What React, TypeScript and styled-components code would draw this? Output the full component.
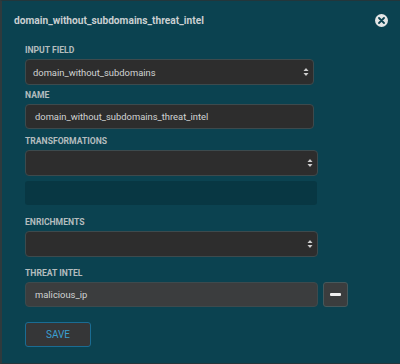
import React from "react";
import styled, { createGlobalStyle } from "styled-components";

const Global = createGlobalStyle`
  html, body { margin: 0; padding: 0; background: #0b4150; }
  body { font-family: Roboto, "Liberation Sans", Arial, sans-serif; }
  * { box-sizing: border-box; }
`;

const Panel = styled.div`
  width: 400px;
  height: 364px;
  background: #0b4250;
  border-left: 2px solid #2f3a3d;
  border-top: 1px solid #23363b;
  border-bottom: 1px solid #23363b;
  padding: 0 0 0 23px;
  display: flex;
  flex-direction: column;
  position: relative;
`;

const Header = styled.div`
  display: flex;
  align-items: center;
  justify-content: space-between;
  height: 38px;
  margin-left: -11px;
  padding-right: 12px;
`;

const Title = styled.div`
  font-size: 10.2px;
  font-weight: 700;
  color: #c9cfd1;
`;

const Close = styled.div`
  width: 13px;
  height: 13px;
  border-radius: 50%;
  background: #e4e6e6;
  display: flex;
  align-items: center;
  justify-content: center;
`;

const Form = styled.div`
  display: flex;
  flex-direction: column;
`;

const Label = styled.div<{ $top: number }>`
  font-size: 8.6px;
  font-weight: 700;
  color: #b4bcbe;
  margin-top: ${(p) => p.$top}px;
  height: 12px;
  line-height: 12px;
  margin-bottom: 3px;
`;

const Field = styled.div<{ $w: number; $h: number; $bg?: string; $pl?: number }>`
  width: ${(p) => p.$w}px;
  height: ${(p) => p.$h}px;
  background: ${(p) => p.$bg || "#2d2d2d"};
  border: 1px solid #3d4a4d;
  border-radius: 4px;
  display: flex;
  align-items: center;
  justify-content: space-between;
  padding: 0 4px 0 ${(p) => p.$pl ?? 7}px;
  font-size: 9.4px;
  color: #d2d4d4;
`;

const Well = styled.div`
  width: 292px;
  height: 24px;
  margin-top: 5px;
  background: #083743;
  border-radius: 3px;
`;

const Row = styled.div`
  display: flex;
  gap: 5px;
`;

const MinusBtn = styled.div`
  width: 25px;
  height: 25px;
  background: #3b3d3e;
  border: 1px solid #46585b;
  border-radius: 3px;
  display: flex;
  align-items: center;
  justify-content: center;
`;

const Bar = styled.div`
  width: 11px;
  height: 3px;
  background: #f0f0f0;
  border-radius: 1px;
`;

const Save = styled.div`
  margin-top: 15px;
  width: 66px;
  height: 25px;
  background: #353637;
  border: 1px solid #1a6c93;
  border-radius: 3px;
  display: flex;
  align-items: center;
  justify-content: center;
  color: #3a9fd0;
  font-size: 10px;
`;

const Arrows = () => (
  <svg width="6" height="10" viewBox="0 0 6 10">
    <path d="M3 1 L5.5 4 H0.5 Z" fill="#cfcfcf" />
    <path d="M3 9 L5.5 6 H0.5 Z" fill="#cfcfcf" />
  </svg>
);

export default function App() {
  return (
    <>
      <Global />
      <Panel>
        <Header>
          <Title>domain_without_subdomains_threat_intel</Title>
          <Close>
            <svg width="7" height="7" viewBox="0 0 7 7">
              <path d="M1 1 L6 6 M6 1 L1 6" stroke="#0b4250" strokeWidth="1.8" strokeLinecap="round" />
            </svg>
          </Close>
        </Header>
        <Form>
          <Label $top={5}>INPUT FIELD</Label>
          <Field $w={289} $h={26}>
            <span>domain_without_subdomains</span>
            <Arrows />
          </Field>
          <Label $top={4}>NAME</Label>
          <Field $w={289} $h={25} $pl={9}>
            <span>domain_without_subdomains_threat_intel</span>
          </Field>
          <Label $top={6}>TRANSFORMATIONS</Label>
          <Field $w={293} $h={26}>
            <span />
            <Arrows />
          </Field>
          <Well />
          <Label $top={11}>ENRICHMENTS</Label>
          <Field $w={293} $h={26}>
            <span />
            <Arrows />
          </Field>
          <Label $top={10}>THREAT INTEL</Label>
          <Row>
            <Field $w={293} $h={25} $bg="#3b3d3e" $pl={9}>
              <span>malicious_ip</span>
            </Field>
            <MinusBtn>
              <Bar />
            </MinusBtn>
          </Row>
          <Save>SAVE</Save>
        </Form>
      </Panel>
    </>
  );
}
